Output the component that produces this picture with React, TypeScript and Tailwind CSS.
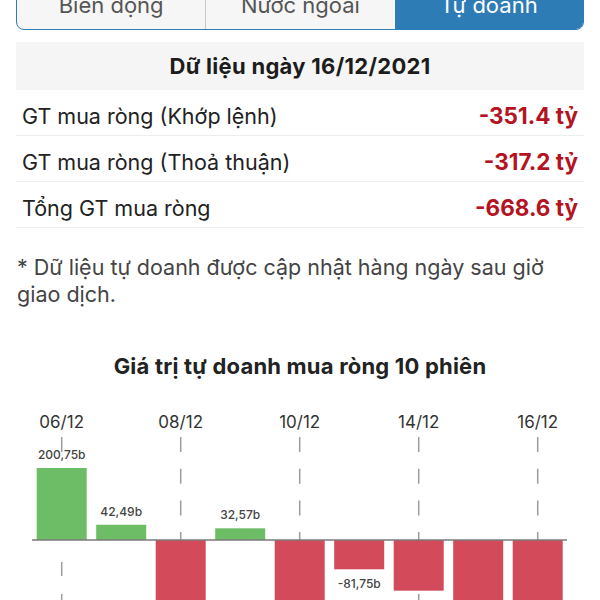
import React from 'react';

const tabs = ['Biến động', 'Nước ngoài', 'Tự doanh'];

const rows = [
  { label: 'GT mua ròng (Khớp lệnh)', value: '-351.4 tỷ' },
  { label: 'GT mua ròng (Thoả thuận)', value: '-317.2 tỷ' },
  { label: 'Tổng GT mua ròng', value: '-668.6 tỷ' },
];

// values in billions, one per session
const bars = [
  { v: 200.75, label: '200,75b' },
  { v: 42.49, label: '42,49b' },
  { v: -360, label: '' },
  { v: 32.57, label: '32,57b' },
  { v: -380, label: '' },
  { v: -81.75, label: '-81,75b' },
  { v: -141.3, label: '' },
  { v: -330, label: '' },
  { v: -340, label: '' },
];

const dates = ['06/12', '08/12', '10/12', '14/12', '16/12'];

function Chart() {
  const base = 140;
  const scale = 0.3587;
  const cx = (i: number) => 61.7 + i * 59.5;
  return (
    <svg width="600" height="200" viewBox="0 0 600 200" className="block">
      {dates.map((d, k) => {
        const x = cx(k * 2);
        return (
          <g key={d}>
            <text
              x={x}
              y={28}
              textAnchor="middle"
              fontSize="17"
              fill="#333"
              fontFamily="Inter, sans-serif"
            >
              {d}
            </text>
            <line x1={x} y1={37} x2={x} y2={base} stroke="#9c9c9c" strokeWidth="1.5" strokeDasharray="15 16.7" />
            <line x1={x} y1={162} x2={x} y2={200} stroke="#9c9c9c" strokeWidth="1.5" strokeDasharray="14 18" />
          </g>
        );
      })}
      {bars.map((b, i) => {
        const h = Math.abs(b.v) * scale;
        const x = cx(i) - 25;
        const pos = b.v >= 0;
        return (
          <g key={i}>
            <rect x={x} y={pos ? base - h : base} width={50} height={h} fill={pos ? '#6cbd66' : '#d34b5b'} />
            {b.label && (
              <text
                x={cx(i)}
                y={pos ? base - h - 9 : base + h + 19}
                textAnchor="middle"
                fontSize="12"
                fontWeight="500"
                fill="#444"
                fontFamily="Inter, sans-serif"
              >
                {b.label}
              </text>
            )}
          </g>
        );
      })}
      <line x1={32} y1={base} x2={567} y2={base} stroke="#7a7a7a" strokeWidth="1.5" />
    </svg>
  );
}

export default function App() {
  return (
    <div className="w-[600px] h-[600px] overflow-hidden bg-white font-['Inter',sans-serif]">
      <div className="mx-[16px] -mt-[20px] flex h-[50px] overflow-hidden rounded-b-[8px] border-[1.5px] border-[#2e7cb6] bg-[#f6f6f6]">
        {tabs.map((t, i) => (
          <div
            key={t}
            className={
              i === 2
                ? 'flex flex-1 items-center justify-center bg-[#2e7cb6] text-[22px] text-white'
                : i === 0
                ? 'flex flex-1 items-center justify-center border-r border-[#c8c8c8] text-[22px] text-[#555]'
                : 'flex flex-1 items-center justify-center text-[22px] text-[#555]'
            }
          >
            {t}
          </div>
        ))}
      </div>

      <div className="mx-[16px] mt-[12px] flex h-[48px] items-center justify-center bg-[#f5f5f5] text-[22px] font-bold tracking-[0.3px] text-[#1c1c1c]">
        Dữ liệu ngày 16/12/2021
      </div>

      <div className="mx-[16px]">
        {rows.map((r) => (
          <div key={r.label} className="flex h-[46px] items-center justify-between border-b border-[#ededed] px-[6px] pt-[7px]">
            <span className="text-[21.5px] text-[#222]">{r.label}</span>
            <span className="text-[22.5px] font-bold text-[#b3141f]">{r.value}</span>
          </div>
        ))}
      </div>

      <p className="mx-[17px] mt-[26px] text-[21.5px] leading-[27px] text-[#444]">
        * Dữ liệu tự doanh được cập nhật hàng ngày sau giờ
        <br />
        giao dịch.
      </p>

      <h2 className="mt-[46px] text-center text-[22px] font-bold leading-[24px] tracking-[0.2px] text-[#222]">
        Giá trị tự doanh mua ròng 10 phiên
      </h2>

      <div className="mt-[22px]">
        <Chart />
      </div>
    </div>
  );
}
